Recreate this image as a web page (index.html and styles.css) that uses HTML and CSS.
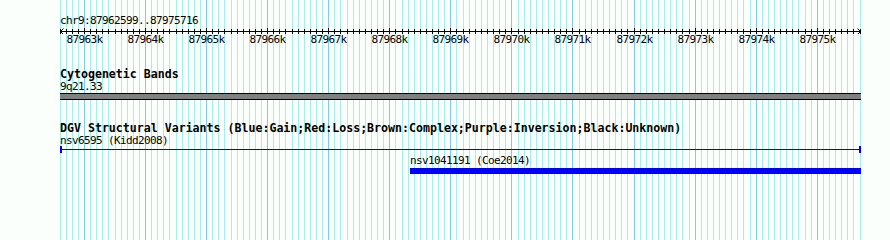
FILE: index.html
```html
<!DOCTYPE html>
<html lang="en">
<head>
    <meta charset="UTF-8">
    <title>chr9:87962599..87975716</title>
    <link rel="stylesheet" href="styles.css">
</head>
<body>
<div class="panel" id="panel" data-start="87962599" data-end="87975716">
    <!-- grid lines get drawn in here -->
    <svg class="grid" id="grid" width="802" height="240"></svg>

    <div class="ruler">
        <div class="seg-name">chr9:87962599..87975716</div>
        <svg class="axis" id="axis" width="802" height="7"></svg>
        <div class="tick-labels" id="tickLabels"></div>
    </div>

    <div class="track band-track">
        <div class="track-title">Cytogenetic Bands</div>
        <div class="feature" data-from="87962599" data-to="87975716">
            <div class="feature-label">9q21.33</div>
            <div class="band"></div>
        </div>
    </div>

    <div class="track dgv-track">
        <div class="track-title">DGV Structural Variants (Blue:Gain;Red:Loss;Brown:Complex;Purple:Inversion;Black:Unknown)</div>
        <div class="feature" data-from="87962599" data-to="87975716">
            <div class="feature-label tight">nsv6595 (Kidd2008)</div>
            <div class="span-line"></div>
        </div>
        <div class="feature second" data-from="87968330" data-to="87975716">
            <div class="feature-label">nsv1041191 (Coe2014)</div>
            <div class="span-bar"></div>
        </div>
    </div>
</div>
<script src="script.js"></script>
</body>
</html>
```

FILE: styles.css
```css
body {
    margin: 0;
    background-color: #fbfffb;
    font-family: "DejaVu Sans Mono", "Liberation Mono", monospace;
    font-size: 11px;
    letter-spacing: -0.62px;
    color: #000;
}
.panel {
    position: relative;
    margin-left: 60px;
    width: 802px;
    height: 240px;
    overflow: hidden;
}
.grid {
    position: absolute;
    top: 0;
    left: 0;
    z-index: 0;
}
.ruler, .track {
    position: relative;
    z-index: 1;
}
.seg-name {
    padding-top: 15px;
    line-height: 12px;
}
.axis {
    display: block;
}
.tick-labels {
    position: relative;
    height: 12px;
}
.tick-label {
    position: absolute;
    top: 0;
    width: 36px;
    text-align: center;
    line-height: 12px;
}
.track {
    margin-top: 22px;
}
.track-title {
    font-weight: bold;
    font-size: 11.6px;
    letter-spacing: 0;
    line-height: 13px;
    white-space: nowrap;
}
.feature-label {
    line-height: 12px;
    white-space: nowrap;
}
.feature-label.tight {
    line-height: 11px;
}
.band {
    height: 7px;
    box-sizing: border-box;
    border-top: 1px solid #000;
    border-bottom: 1px solid #000;
    background-color: #808080;
}
.span-line {
    height: 7px;
    box-sizing: border-box;
    border-left: 2px solid #0000ff;
    border-right: 2px solid #0000ff;
    background: linear-gradient(#0000ff, #0000ff) 0 3px / 100% 1px no-repeat;
}
.feature.second {
    margin-top: 2px;
}
.span-bar {
    margin-top: 1px;
    height: 6px;
    background-color: #0000ff;
}
```

FILE: script.js
```js
const panel = document.getElementById('panel');
const start = +panel.dataset.start;
const end = +panel.dataset.end;
const scale = 800 / 13101; // px per bp
const NS = 'http://www.w3.org/2000/svg';

function px(pos) {
    return (pos - start) * scale;
}

function line(svg, x1, y1, x2, y2, color) {
    const l = document.createElementNS(NS, 'line');
    l.setAttribute('x1', x1);
    l.setAttribute('y1', y1);
    l.setAttribute('x2', x2);
    l.setAttribute('y2', y2);
    l.setAttribute('stroke', color);
    svg.appendChild(l);
}

const grid = document.getElementById('grid');
const axis = document.getElementById('axis');
const labels = document.getElementById('tickLabels');

// axis line + arrows
line(axis, 0, 4.5, 800, 4.5, '#000');
line(axis, 0.5, 4.5, 3.5, 1.5, '#000');
line(axis, 0.5, 4.5, 3.5, 7.5, '#000');
line(axis, 800.5, 4.5, 797.5, 1.5, '#000');
line(axis, 800.5, 4.5, 797.5, 7.5, '#000');

for (let p = Math.ceil(start / 100) * 100; p <= end; p += 100) {
    const x = Math.floor(px(p)) + 0.5;
    const major = p % 1000 === 0;
    line(grid, x, 0, x, 240, major ? '#82c9ea' : '#a8ecec');
    line(axis, x, major ? 1 : 2, x, 7, '#000');
    if (major) {
        const d = document.createElement('div');
        d.className = 'tick-label';
        d.style.left = (x - 18) + 'px';
        d.textContent = (p / 1000) + 'k';
        labels.appendChild(d);
    }
}

// place features by their coordinates
document.querySelectorAll('.feature').forEach(function (f) {
    const from = px(+f.dataset.from);
    const to = Math.min(px(+f.dataset.to), 802);
    f.style.marginLeft = Math.round(from) + 'px';
    f.style.width = Math.round(to - from) + 'px';
});
```
